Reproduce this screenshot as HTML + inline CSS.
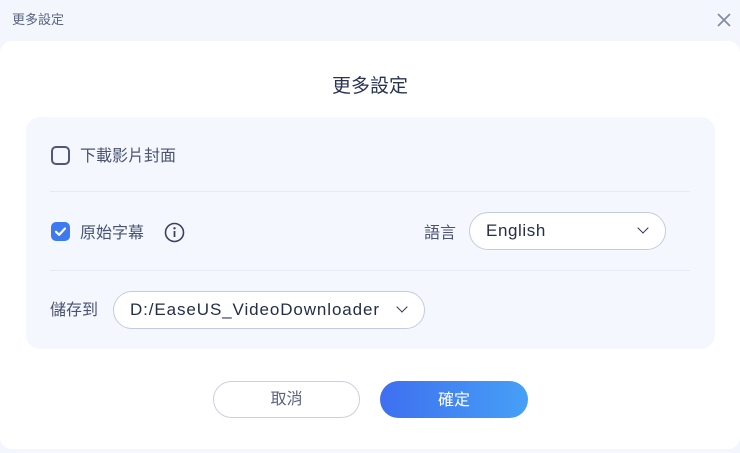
<!DOCTYPE html>
<html><head><meta charset="utf-8"><style>
*{margin:0;padding:0;box-sizing:border-box}
body{width:740px;height:453px;background:#f3f7fd;position:relative;overflow:hidden;font-family:"Liberation Sans","Noto Sans CJK TC",sans-serif;color:#3e4760}
.abs{position:absolute}
.card{left:0;top:41px;width:740px;height:408px;background:#fff;border-radius:12px}
.panel{left:26px;top:117px;width:689px;height:232px;background:#f4f8fe;border-radius:14px}
.div{height:1px;background:#e5ebf3;left:50px;width:640px}
.sel{border:1.5px solid #c3cbe4;border-radius:19px;background:#fff;height:38px;color:#252e48;font-size:17px;display:flex;align-items:center;padding-left:16px}
.chev{position:absolute;width:8px;height:8px;border-right:1.8px solid #2d3550;border-bottom:1.8px solid #2d3550;transform:rotate(45deg)}
.lbl{font-size:16px;color:#4a5370}
</style></head><body>
<div class="abs" style="left:12px;top:9px;font-size:13px;color:#5a6580">更多設定</div>
<svg class="abs" style="left:717px;top:13px" width="14" height="14" viewBox="0 0 14 14"><path d="M1 1L13 13M13 1L1 13" stroke="#858ca0" stroke-width="1.8"/></svg>
<div class="abs card"></div>
<div class="abs" style="left:0;width:740px;top:71px;text-align:center;font-size:19px;color:#2a3350">更多設定</div>
<div class="abs panel"></div>
<div class="abs" style="left:51px;top:146px;width:19px;height:19px;border:2px solid #4f5878;border-radius:5px"></div>
<div class="abs lbl" style="left:80px;top:142px">下載影片封面</div>
<div class="abs div" style="top:191px"></div>
<div class="abs" style="left:51px;top:222px;width:19px;height:19px;background:#3d7af0;border-radius:5px"></div>
<svg class="abs" style="left:51px;top:222px" width="19" height="19" viewBox="0 0 19 19"><path d="M5 9.8L8.2 12.8L14 6.5" stroke="#fff" stroke-width="2.2" fill="none" stroke-linecap="round" stroke-linejoin="round"/></svg>
<div class="abs lbl" style="left:80px;top:219px">原始字幕</div>
<svg class="abs" style="left:164px;top:222px" width="21" height="21" viewBox="0 0 21 21"><circle cx="10.5" cy="10.5" r="9" stroke="#3a4260" stroke-width="1.6" fill="none"/><circle cx="10.5" cy="6.3" r="1.2" fill="#3a4260"/><path d="M10.5 9v6" stroke="#3a4260" stroke-width="1.8"/></svg>
<div class="abs lbl" style="left:424px;top:219px">語言</div>
<div class="abs sel" style="left:469px;top:212px;width:197px;letter-spacing:0.6px">English<span class="chev" style="right:18px;top:11px"></span></div>
<div class="abs div" style="top:270px"></div>
<div class="abs lbl" style="left:50px;top:296px">儲存到</div>
<div class="abs sel" style="left:113px;top:291px;width:312px;letter-spacing:0.9px">D:/EaseUS_VideoDownloader<span class="chev" style="right:18px;top:11px"></span></div>
<div class="abs" style="left:213px;top:381px;width:147px;height:37px;border:1.5px solid #c9cfe6;border-radius:19px;background:#fff;text-align:center;line-height:36px;font-size:16px;color:#5c6480">取消</div>
<div class="abs" style="left:380px;top:381px;width:148px;height:37px;border-radius:19px;background:linear-gradient(90deg,#3e6ff0,#46a0f6);text-align:center;line-height:39px;font-size:16px;color:#fff">確定</div>
</body></html>
